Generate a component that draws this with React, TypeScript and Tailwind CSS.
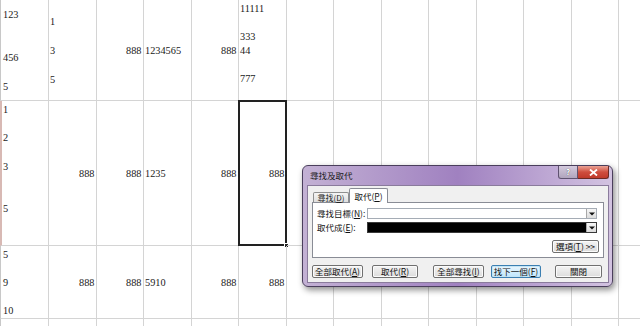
import React from "react";

type Cell = { lines: string[]; right?: boolean };

const COLS = [49, 48, 47, 48, 47, 48, 47, 48, 47, 48, 47, 48, 47];

const ROWS: { h: number; cells: Cell[] }[] = [
  {
    h: 101,
    cells: [
      { lines: ["123", "", "", "456", "", "5"] },
      { lines: ["1", "", "3", "", "5"] },
      { lines: ["888"], right: true },
      { lines: ["1234565"] },
      { lines: ["888"], right: true },
      { lines: ["11111", "", "333", "44", "", "777", ""] },
    ],
  },
  {
    h: 145,
    cells: [
      { lines: ["1", "", "2", "", "3", "", "", "5", "", ""] },
      { lines: ["888"], right: true },
      { lines: ["888"], right: true },
      { lines: ["1235"] },
      { lines: ["888"], right: true },
      { lines: ["888"], right: true },
    ],
  },
  {
    h: 73,
    cells: [
      { lines: ["5", "", "9", "", "10"] },
      { lines: ["888"], right: true },
      { lines: ["888"], right: true },
      { lines: ["5910"] },
      { lines: ["888"], right: true },
      { lines: ["888"], right: true },
    ],
  },
  { h: 30, cells: [] },
];

const Key: React.FC<{ k: string }> = ({ k }) => (
  <>
    (<span className="underline">{k}</span>)
  </>
);

const DropArrow: React.FC = () => (
  <div className="w-[10px] h-full flex items-center justify-center bg-gradient-to-b from-[#f6f6f6] to-[#dcdcdc] border-l border-[#a8a8a8]">
    <svg width="6" height="4" viewBox="0 0 6 4">
      <path d="M0 0.5 L6 0.5 L3 3.5 Z" fill="#111" />
    </svg>
  </div>
);

const Btn: React.FC<{
  w: number;
  ml: string;
  focused?: boolean;
  children: React.ReactNode;
}> = ({ w, ml, focused, children }) => (
  <div
    style={{ width: w }}
    className={`${ml} h-[13px] flex items-center justify-center rounded-[2px] border text-[8.5px] leading-none text-[#111] ${
      focused
        ? "border-[#3c7fb1] bg-gradient-to-b from-[#eaf6fd] to-[#bee6fd] shadow-[inset_0_0_0_1px_#c4e5f6]"
        : "border-[#707070] bg-gradient-to-b from-[#f4f4f4] to-[#dcdcdc] shadow-[inset_0_0_0_1px_#fbfbfb]"
    }`}
  >
    {children}
  </div>
);

const FindReplace: React.FC = () => (
  <div
    className="absolute left-[302px] top-[165px] w-[311px] h-[122px] rounded-[6px] border border-[#4a3e5c] bg-gradient-to-r from-[#c3b1d4] via-[#a081c0] to-[#d3c3e1] shadow-[2px_3px_6px_rgba(0,0,0,0.45)] flex flex-col"
    style={{ fontFamily: '"Noto Sans CJK TC", "Noto Sans", sans-serif' }}
  >
    <div className="h-[19px] flex items-start justify-between">
      <span className="ml-[7px] mt-[4px] text-[8.5px] leading-[10px] text-[#1b1b1b]">
        尋找及取代
      </span>
      <div className="mr-[3px] flex">
        <div className="w-[20px] h-[13px] rounded-bl-[3px] border border-t-0 border-[#5f5270] bg-gradient-to-b from-[#d4cadd] to-[#b0a4bd] flex items-center justify-center">
          <span className="text-[8px] leading-none font-bold text-white [text-shadow:0_0_1px_#333]">?</span>
        </div>
        <div className="w-[31px] h-[13px] rounded-br-[3px] border border-t-0 border-l-0 border-[#6b2a24] bg-gradient-to-b from-[#e9a195] via-[#cf4d3e] to-[#c0392b] flex items-center justify-center">
          <svg width="9" height="7" viewBox="0 0 9 7">
            <path d="M1 0.5 L8 6.5 M8 0.5 L1 6.5" stroke="#fff" strokeWidth="1.8" />
          </svg>
        </div>
      </div>
    </div>
    <div className="ml-[4px] mr-[3px] h-[98px] border border-[#8a7b9c] bg-[#f0f0f0] px-[4px] pt-[3px] flex flex-col">
      <div className="flex items-end h-[14px] -mb-px relative z-10">
        <div className="ml-[1px] w-[36px] h-[10px] border border-[#8e8f8f] border-b-0 rounded-t-[2px] bg-gradient-to-b from-[#f5f5f5] to-[#dedede] flex items-center justify-center text-[8px] leading-none text-[#222] mb-px">
          尋找<Key k="D" />
        </div>
        <div className="w-[39px] h-[15px] border border-[#898c95] border-b-0 rounded-t-[2px] bg-white flex items-center justify-center text-[8.5px] leading-none text-[#111]">
          取代<Key k="P" />
        </div>
      </div>
      <div className="h-[56px] border border-[#898c95] bg-white px-[4px] pt-[5px] flex flex-col">
        <div className="flex items-center h-[11px]">
          <span className="w-[50px] text-[8.5px] leading-none text-[#111] whitespace-nowrap">
            尋找目標<Key k="N" />:
          </span>
          <div className="w-[230px] h-[11px] border border-[#a5acb5] bg-white flex justify-end">
            <DropArrow />
          </div>
        </div>
        <div className="flex items-center h-[11px] mt-[3px]">
          <span className="w-[50px] text-[8.5px] leading-none text-[#111] whitespace-nowrap">
            取代成<Key k="E" />:
          </span>
          <div className="w-[230px] h-[11px] border border-[#3a3a3a] bg-black flex justify-end">
            <DropArrow />
          </div>
        </div>
        <div className="flex justify-end mt-[7px]">
          <Btn w={47} ml="">
            選項<Key k="T" />&nbsp;&gt;&gt;
          </Btn>
        </div>
      </div>
      <div className="flex mt-[7px]">
        <Btn w={51} ml="ml-[0px]">
          全部取代<Key k="A" />
        </Btn>
        <Btn w={46} ml="ml-[9px]">
          取代<Key k="R" />
        </Btn>
        <Btn w={51} ml="ml-[15px]">
          全部尋找<Key k="I" />
        </Btn>
        <Btn w={50} ml="ml-[7px]" focused>
          找下一個<Key k="F" />
        </Btn>
        <Btn w={47} ml="ml-[14px]">
          關閉
        </Btn>
      </div>
    </div>
  </div>
);

const App: React.FC = () => {
  return (
    <div
      className="relative w-[640px] h-[326px] overflow-hidden bg-white text-[10.3px] text-[#1a1a1a]"
      style={{ fontFamily: '"Liberation Serif", "Times New Roman", serif' }}
    >
      {ROWS.map((row, ri) => (
        <div key={ri} className="flex" style={{ height: row.h }}>
          {COLS.map((w, ci) => {
            const cell = row.cells[ci];
            const selected = ri === 1 && ci === 5;
            return (
              <div
                key={ci}
                style={{ width: w }}
                className={`relative shrink-0 border-r border-b border-[#d4d4d4] pt-[2px] flex flex-col justify-center ${
                  ci === 0
                    ? ri === 1
                      ? "border-l-2 border-l-[#d8b9b4] pl-[1px]"
                      : "border-l border-l-[#c8c8c8] pl-[2px]"
                    : "pl-[1px]"
                } ${cell?.right ? "items-end pr-[1.5px]" : "items-start"}`}
              >
                {cell?.lines.map((t, li) => (
                  <div key={li} className="h-[14.4px] leading-[14.4px] whitespace-pre">
                    {t}
                  </div>
                ))}
                {selected && (
                  <>
                    <div className="absolute -left-px -top-px -right-px -bottom-px border-2 border-[#222]" />
                    <div className="absolute -right-[3px] -bottom-[3px] w-[5px] h-[5px] bg-[#222] border border-white" />
                  </>
                )}
              </div>
            );
          })}
          <div className="flex-1 border-b border-[#d4d4d4]" />
        </div>
      ))}
      <FindReplace />
    </div>
  );
};

export default App;
